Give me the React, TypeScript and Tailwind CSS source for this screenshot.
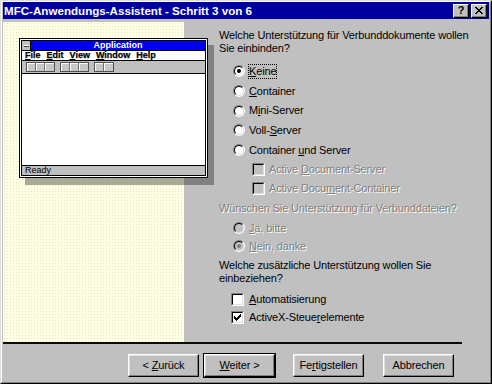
import React from "react";

function U({ children }: { children: React.ReactNode }) {
  return <span className="underline underline-offset-[1px]">{children}</span>;
}

function Radio({ checked, disabled }: { checked?: boolean; disabled?: boolean }) {
  return (
    <div className="w-[12px] h-[12px] shrink-0 rounded-full border border-t-[#808080] border-l-[#808080] border-r-white border-b-white flex">
      <div
        className={`flex-1 rounded-full border border-t-black border-l-black border-r-[#dfdfdf] border-b-[#dfdfdf] flex items-center justify-center ${
          disabled ? "bg-[#c0c0c0]" : "bg-white"
        }`}
      >
        {checked && (
          <div className={`w-[4px] h-[4px] rounded-full ${disabled ? "bg-[#808080]" : "bg-black"}`} />
        )}
      </div>
    </div>
  );
}

function Check({ checked, disabled }: { checked?: boolean; disabled?: boolean }) {
  return (
    <div className="w-[13px] h-[13px] shrink-0 border border-t-[#808080] border-l-[#808080] border-r-white border-b-white flex">
      <div
        className={`flex-1 border border-t-black border-l-black border-r-[#dfdfdf] border-b-[#dfdfdf] flex items-center justify-center ${
          disabled ? "bg-[#c0c0c0]" : "bg-white"
        }`}
      >
        {checked && (
          <svg width="7" height="7" viewBox="0 0 7 7" shapeRendering="crispEdges">
            <g fill="#000">
              <rect x="6" y="0" width="1" height="1" />
              <rect x="5" y="1" width="2" height="1" />
              <rect x="0" y="2" width="1" height="1" />
              <rect x="4" y="2" width="3" height="1" />
              <rect x="0" y="3" width="2" height="1" />
              <rect x="3" y="3" width="3" height="1" />
              <rect x="0" y="4" width="5" height="1" />
              <rect x="1" y="5" width="3" height="1" />
              <rect x="2" y="6" width="1" height="1" />
            </g>
          </svg>
        )}
      </div>
    </div>
  );
}

function TitleBtn({ children }: { children: React.ReactNode }) {
  return (
    <div className="w-[16px] h-[14px] bg-[#c0c0c0] border border-t-white border-l-white border-r-black border-b-black shadow-[inset_-1px_-1px_0_#808080] flex items-center justify-center">
      {children}
    </div>
  );
}

function Btn({ children }: { children: React.ReactNode }) {
  return (
    <div className="w-[71px] h-[23px] bg-[#c0c0c0] border border-t-white border-l-white border-r-black border-b-black shadow-[inset_-1px_-1px_0_#808080,inset_1px_1px_0_#dfdfdf] flex items-center justify-center text-[11px] leading-none tracking-[-0.15px]">
      <span className="whitespace-pre">{children}</span>
    </div>
  );
}

function ToolGroup({ n }: { n: number }) {
  return (
    <div className="flex border border-[#505050] bg-[#c0c0c0]">
      {Array.from({ length: n }).map((_, i) => (
        <div
          key={i}
          className={`w-[9px] h-[8px] bg-[#c8c8c8] shadow-[inset_1px_1px_0_#ffffff] ${
            i < n - 1 ? "border-r border-[#707070]" : ""
          }`}
        />
      ))}
    </div>
  );
}

function Illustration() {
  return (
    <div className="relative z-10 ml-[16px] mt-[16px] w-[189px] h-[140px] border border-black bg-white p-[1px] shadow-[6px_7px_0_rgba(0,0,0,0.33)]">
      <div className="h-full border border-black flex flex-col">
        <div className="h-[9px] flex shrink-0">
          <div className="w-[9px] bg-[#c0c0c0] border-r border-black flex items-center justify-center">
            <div className="w-[5px] h-[2px] bg-white border-b border-[#404040]" />
          </div>
          <div className="flex-1 bg-[#0000f0] flex items-center justify-center text-white font-bold text-[9px] leading-none">
            Application
          </div>
        </div>
        <div className="h-[10px] shrink-0 border-t border-black bg-white flex items-center gap-[6px] pl-[3px] text-[9px] font-bold leading-none [-webkit-text-stroke:0.25px_#000]">
          <span><U>F</U>ile</span>
          <span><U>E</U>dit</span>
          <span><U>V</U>iew</span>
          <span><U>W</U>indow</span>
          <span><U>H</U>elp</span>
        </div>
        <div className="h-[13px] shrink-0 border-t border-black bg-[#c0c0c0] flex items-start pt-[1px] pl-[4px] gap-[5px]">
          <ToolGroup n={3} />
          <ToolGroup n={3} />
          <ToolGroup n={2} />
        </div>
        <div className="flex-1 bg-white border-t border-black" />
        <div className="h-[10px] shrink-0 border-t border-black bg-[#c0c0c0] pl-[3px] text-[9px] leading-[9px]">
          Ready
        </div>
      </div>
    </div>
  );
}

const dis = "text-[#808080] [text-shadow:1px_1px_0_#ffffff]";

export default function App() {
  return (
    <div className="w-[492px] h-[384px] bg-[#c0c0c0] border border-t-[#dfdfdf] border-l-[#dfdfdf] border-r-black border-b-black font-['Liberation_Sans',Arial,sans-serif] text-black overflow-hidden">
      <div className="h-full border border-t-white border-l-white border-r-[#808080] border-b-[#808080] px-[1px] flex flex-col">
        {/* Title bar */}
        <div className="h-[17px] shrink-0 bg-[#0000a0] flex items-center pl-[1px] pr-[2px]">
          <span className="text-white font-bold text-[11.6px] leading-none">
            MFC-Anwendungs-Assistent - Schritt 3 von 6
          </span>
          <div className="ml-auto flex gap-[2px]">
            <TitleBtn>
              <span className="font-bold text-[11px] leading-none">?</span>
            </TitleBtn>
            <TitleBtn>
              <svg width="8" height="7" viewBox="0 0 8 7" shapeRendering="crispEdges">
                <g fill="#000">
                  <rect x="0" y="0" width="2" height="1" />
                  <rect x="6" y="0" width="2" height="1" />
                  <rect x="1" y="1" width="2" height="1" />
                  <rect x="5" y="1" width="2" height="1" />
                  <rect x="2" y="2" width="4" height="1" />
                  <rect x="3" y="3" width="2" height="1" />
                  <rect x="2" y="4" width="4" height="1" />
                  <rect x="1" y="5" width="2" height="1" />
                  <rect x="5" y="5" width="2" height="1" />
                  <rect x="0" y="6" width="2" height="1" />
                  <rect x="6" y="6" width="2" height="1" />
                </g>
              </svg>
            </TitleBtn>
          </div>
        </div>

        {/* Content */}
        <div className="mt-[3px] h-[320px] shrink-0 flex">
          <div className="w-[181px] shrink-0 border-r border-white bg-[#ffffe6] bg-[radial-gradient(#e6e6b8_0.7px,transparent_0.9px)] bg-[length:3px_3px]">
            <Illustration />
          </div>
          <div className="flex-1 pl-[35px] pt-[7px] text-[11px] leading-[13px] tracking-[-0.15px] flex flex-col">
            <div>
              Welche Unterstützung für Verbunddokumente wollen
              <br />
              Sie einbinden?
            </div>
            <div className="mt-[6px] flex flex-col">
              <div className="h-[20px] flex items-center pl-[14px]">
                <Radio checked />
                <span className="ml-[3px] border border-dotted border-black leading-[13px]">
                  <U>K</U>eine
                </span>
              </div>
              <div className="h-[20px] flex items-center pl-[14px]">
                <Radio />
                <span className="ml-[4px]">
                  <U>C</U>ontainer
                </span>
              </div>
              <div className="h-[19px] flex items-center pl-[14px]">
                <Radio />
                <span className="ml-[4px]">
                  M<U>i</U>ni-Server
                </span>
              </div>
              <div className="h-[20px] flex items-center pl-[14px]">
                <Radio />
                <span className="ml-[4px]">
                  Voll-<U>S</U>erver
                </span>
              </div>
              <div className="h-[20px] flex items-center pl-[14px]">
                <Radio />
                <span className="ml-[4px]">
                  Container <U>u</U>nd Server
                </span>
              </div>
              <div className="h-[19px] flex items-center pl-[33px]">
                <Check disabled />
                <span className={`ml-[4px] ${dis}`}>
                  Active <U>D</U>ocument-Server
                </span>
              </div>
              <div className="h-[19px] flex items-center pl-[33px]">
                <Check disabled />
                <span className={`ml-[4px] ${dis}`}>
                  Active Docu<U>m</U>ent-Container
                </span>
              </div>
            </div>
            <div className={`mt-[4px] ${dis}`}>Wünschen Sie Unterstützung für Verbunddateien?</div>
            <div className="mt-[4px] flex flex-col">
              <div className="h-[18px] flex items-center pl-[14px]">
                <Radio disabled />
                <span className={`ml-[4px] ${dis}`}>
                  <U>J</U>a, bitte
                </span>
              </div>
              <div className="h-[18px] flex items-center pl-[14px]">
                <Radio checked disabled />
                <span className={`ml-[4px] ${dis}`}>
                  <U>N</U>ein, danke
                </span>
              </div>
            </div>
            <div className="mt-[4px]">
              Welche zusätzliche Unterstützung wollen Sie
              <br />
              einbeziehen?
            </div>
            <div className="mt-[5px] flex flex-col">
              <div className="h-[18px] flex items-center pl-[12px]">
                <Check />
                <span className="ml-[5px]">
                  <U>A</U>utomatisierung
                </span>
              </div>
              <div className="h-[18px] flex items-center pl-[12px]">
                <Check checked />
                <span className="ml-[5px]">
                  ActiveX-Steue<U>r</U>elemente
                </span>
              </div>
            </div>
          </div>
        </div>

        {/* Separator */}
        <div className="h-[2px] w-[459px] shrink-0 bg-[#0a0a0a]" />

        {/* Buttons */}
        <div className="mt-[9px] flex items-center pl-[125px]">
          <Btn>
            {"< "}
            <U>Z</U>urück
          </Btn>
          <div className="ml-[4px] border border-black">
            <Btn>
              <U>W</U>eiter{" >"}
            </Btn>
          </div>
          <div className="ml-[17px]">
            <Btn>
              Fe<U>r</U>tigstellen
            </Btn>
          </div>
          <div className="ml-[19px]">
            <Btn>Abbrechen</Btn>
          </div>
        </div>
      </div>
    </div>
  );
}
